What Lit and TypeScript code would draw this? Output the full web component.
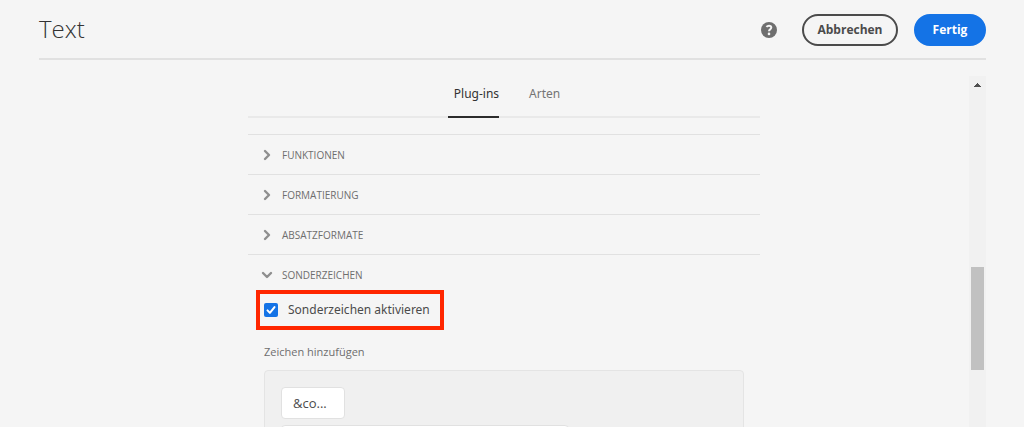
import { LitElement, html, css, svg } from "lit";
import { customElement, property, state } from "lit/decorators.js";
import { classMap } from "lit/directives/class-map.js";

const chevron = (open: boolean) => html`<svg class="chevron" width="12" height="12" viewBox="0 0 12 12" aria-hidden="true">
  ${open ? svg`<path d="M2 4l4 4 4-4" />` : svg`<path d="M4 2l4 4-4 4" />`}
</svg>`;

@customElement("accordion-section")
export class AccordionSection extends LitElement {
  @property() label = "";
  @property({ type: Boolean }) open = false;

  static styles = css`
    :host {
      display: block;
      border-top: 1px solid #e1e1e1;
    }
    .head {
      display: flex;
      align-items: center;
      gap: 9px;
      width: 100%;
      height: 39px;
      margin: 0;
      padding: 1px 13px 0;
      border: 0;
      background: none;
      color: #6e6e6e;
      font: 400 10px/16px "Open Sans", sans-serif;
      text-transform: uppercase;
      text-align: left;
      cursor: pointer;
    }
    .chevron {
      fill: none;
      stroke: #8e8e8e;
      stroke-width: 2.4;
      stroke-linecap: round;
      stroke-linejoin: round;
    }
  `;

  render() {
    return html`
      <button class="head" aria-expanded=${this.open} @click=${() => (this.open = !this.open)}>
        ${chevron(this.open)}<span>${this.label}</span>
      </button>
      ${this.open ? html`<slot></slot>` : null}
    `;
  }
}

@customElement("app-root")
export class AppRoot extends LitElement {
  @state() tab = "Plug-ins";
  @state() enabled = true;

  static styles = css`
    :host {
      display: flex;
      flex-direction: column;
      box-sizing: border-box;
      height: 100vh;
      padding: 0 38px 0 39px;
      overflow: hidden;
      background: #f5f5f5;
      color: #4b4b4b;
      font: 400 12px/20px "Noto Sans", sans-serif;
    }
    .header {
      display: flex;
      align-items: center;
      flex: none;
      box-sizing: border-box;
      height: 60px;
      padding-top: 2px;
      border-bottom: 2px solid #e1e1e1;
    }
    .title {
      flex: 1;
      margin: 0;
      padding-bottom: 2px;
      color: #323232;
      font: 300 24px/32px "Open Sans", sans-serif;
    }
    .help {
      display: block;
      margin-right: 25px;
      padding: 0;
      border: 0;
      background: none;
      cursor: pointer;
    }
    .help svg {
      display: block;
    }
    .button {
      box-sizing: border-box;
      height: 32px;
      padding: 0 14px;
      border: 2px solid #4b4b4b;
      border-radius: 16px;
      background: none;
      color: #4b4b4b;
      font: 700 12px/20px "Open Sans", sans-serif;
      min-width: 72px;
      cursor: pointer;
    }
    .button.cancel {
      min-width: 96px;
      margin-right: 16px;
      padding: 0;
    }
    .button.primary {
      border-color: #1473e6;
      background: #1473e6;
      color: #fff;
    }
    .body {
      display: flex;
      flex: 1;
      min-height: 0;
      margin-top: 16px;
    }
    .scroll {
      flex: 1;
      overflow: hidden;
    }
    .panel {
      max-width: 512px;
      margin: 0 auto;
    }
    .tabs {
      display: flex;
      justify-content: center;
      gap: 24px;
      margin-bottom: 16px;
      border-bottom: 2px solid #e9e9e9;
    }
    .tab {
      height: 42px;
      margin: 0 0 -2px;
      padding: 0 0 4px 6px;
      border: 0;
      border-bottom: 2px solid transparent;
      background: none;
      color: #747474;
      font: 400 12px/20px "Noto Sans", sans-serif;
      cursor: pointer;
    }
    .tab.selected {
      border-color: #2c2c2c;
      color: #323232;
    }
    .content {
      padding: 0 16px;
    }
    .enable {
      position: relative;
      display: inline-flex;
      align-items: center;
      gap: 10px;
      height: 32px;
    }
    .enable::after {
      content: "";
      position: absolute;
      inset: -4px -14px -4px -8px;
      border: 4px solid #ff2600;
      pointer-events: none;
    }
    .check {
      appearance: none;
      width: 14px;
      height: 14px;
      margin: 0;
      border: 2px solid #6e6e6e;
      border-radius: 2px;
      background: #fff;
    }
    .check:checked {
      border: 0;
      background: #1473e6
        url("data:image/svg+xml,%3Csvg xmlns='http://www.w3.org/2000/svg' viewBox='0 0 14 14'%3E%3Cpath d='M3.5 7.4l2.4 2.5 4.6-5.8' fill='none' stroke='white' stroke-width='2' stroke-linecap='round' stroke-linejoin='round'/%3E%3C/svg%3E");
    }
    .label {
      margin: 16px 0 8px;
      color: #6e6e6e;
      font: 400 11px/20px "Open Sans", sans-serif;
    }
    .well {
      display: flex;
      flex-direction: column;
      align-items: flex-start;
      gap: 6px;
      padding: 16px;
      border: 1px solid #e4e4e4;
      border-radius: 4px;
      background: #f0f0f0;
    }
    .field {
      box-sizing: border-box;
      width: 288px;
      max-width: 100%;
      height: 32px;
      padding: 0 11px;
      border: 1px solid #e1e1e1;
      border-radius: 4px;
      background: #fff;
      color: #4b4b4b;
      font: 400 13px/20px "Open Sans", sans-serif;
      text-overflow: ellipsis;
    }
    .field.short {
      width: 64px;
    }
    .bar {
      display: flex;
      flex-direction: column;
      flex: none;
      width: 17px;
      background: #f1f1f1;
    }
    .arrow {
      display: block;
      margin: 7px 5px 0;
    }
    .thumb {
      width: 13px;
      height: 103px;
      margin: 180px 2px 0;
      background: #c1c1c1;
    }
  `;

  render() {
    return html`
      <header class="header">
        <h1 class="title">Text</h1>
        <button class="help" aria-label="Hilfe">
          <svg width="16" height="16" viewBox="0 0 16 16">
            <circle cx="8" cy="8" r="8" fill="#6e6e6e" />
            <path d="M5.4 4.9C6.2 4 7.1 3.7 8 3.7c1.4 0 2.3.7 2.3 1.9C10.3 7.4 8 7.3 8 9.2" fill="none" stroke="#f5f5f5" stroke-width="2" />
            <circle cx="8" cy="11.9" r="1.3" fill="#f5f5f5" />
          </svg>
        </button>
        <button class="button cancel">Abbrechen</button>
        <button class="button primary">Fertig</button>
      </header>
      <div class="body">
        <main class="scroll">
          <div class="panel">
            <div class="tabs" role="tablist">
              ${["Plug-ins", "Arten"].map(
                (name) => html`<button
                  role="tab"
                  class=${classMap({ tab: true, selected: this.tab === name })}
                  aria-selected=${this.tab === name}
                  @click=${() => (this.tab = name)}
                >${name}</button>`
              )}
            </div>
            <accordion-section label="Funktionen"></accordion-section>
            <accordion-section label="Formatierung"></accordion-section>
            <accordion-section label="Absatzformate"></accordion-section>
            <accordion-section label="Sonderzeichen" open>
              <div class="content">
                <label class="enable">
                  <input
                    class="check"
                    type="checkbox"
                    .checked=${this.enabled}
                    @change=${(e: Event) => (this.enabled = (e.target as HTMLInputElement).checked)}
                  />
                  <span>Sonderzeichen aktivieren</span>
                </label>
                <div class="label" id="chars">Zeichen hinzufügen</div>
                <div class="well" role="group" aria-labelledby="chars">
                  <input class="field short" aria-label="Zeichen" .value=${"&co..."} />
                  <input class="field" aria-label="Name" />
                </div>
              </div>
            </accordion-section>
          </div>
        </main>
        <div class="bar" aria-hidden="true">
          <svg class="arrow" width="7" height="4" viewBox="0 0 7 4" shape-rendering="crispEdges">
            <path d="M3 0h1v1h1v1h1v1h1v1H0V3h1V2h1V1h1z" fill="#505050" />
          </svg>
          <div class="thumb"></div>
        </div>
      </div>
    `;
  }
}
